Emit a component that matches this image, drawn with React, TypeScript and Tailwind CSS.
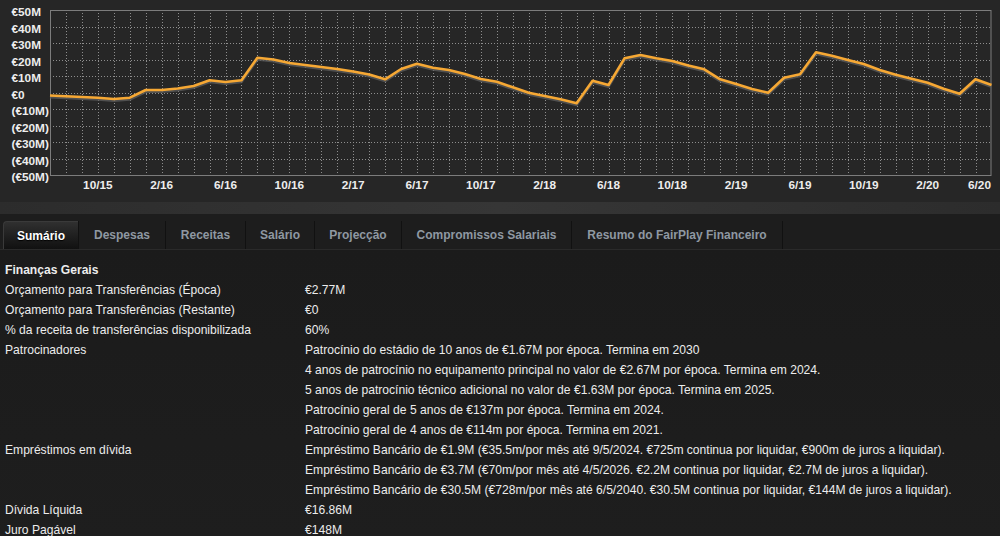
import React from "react";

const ys = [95.5, 96.3, 97, 97.8, 99, 97.7, 90, 90, 88.5, 86, 80.3, 82, 80.3, 57.7, 59.5, 63, 65, 67, 69, 71.5, 74.5, 79.3, 69, 63.7, 67.7, 70, 74, 79, 81.7, 87.3, 92.7, 96, 99.3, 103.3, 80.7, 85, 58.3, 55, 58.3, 61, 65.5, 69.3, 79.3, 84, 89, 92.7, 77.7, 74.3, 52.3, 55.7, 60, 64, 70, 74.7, 78.7, 82.7, 88.7, 93.7, 79.3, 85];

const L = 50;
const R = 991.5;
const T = 10;
const B = 175;
const dx = (R - L) / 59;
const dy = (B - T) / 10;

const yLabels = ["€50M", "€40M", "€30M", "€20M", "€10M", "€0", "(€10M)", "(€20M)", "(€30M)", "(€40M)", "(€50M)"];
const xLabels: [number, string][] = [
  [3, "10/15"], [7, "2/16"], [11, "6/16"], [15, "10/16"], [19, "2/17"], [23, "6/17"], [27, "10/17"], [31, "2/18"], [35, "6/18"], [39, "10/18"], [43, "2/19"], [47, "6/19"], [51, "10/19"], [55, "2/20"],
];

function Chart() {
  const pts = ys.map((y, i) => `${(L + i * dx).toFixed(1)},${y}`).join(" ");
  const shadow = ys.map((y, i) => `${(L + i * dx).toFixed(1)},${y + 1.8}`).join(" ");
  return (
    <svg width={1000} height={202} className="block">
      <rect x={0} y={0} width={1000} height={202} fill="#262626" />
      {Array.from({ length: 58 }, (_, i) => {
        const x = Math.round(L + (i + 1) * dx) + 0.5;
        return <line key={"v" + i} x1={x} x2={x} y1={T} y2={B} stroke="#8e8e8e" strokeWidth={1} strokeDasharray="1 2" />;
      })}
      {Array.from({ length: 9 }, (_, i) => {
        const y = Math.round(T + (i + 1) * dy) + 0.5;
        return <line key={"h" + i} x1={L} x2={R} y1={y} y2={y} stroke="#8e8e8e" strokeWidth={1} strokeDasharray="1 2" />;
      })}
      <rect x={L + 0.5} y={T + 0.5} width={R - L - 1} height={B - T} fill="none" stroke="#7c7c7c" strokeWidth={1} />
      <polyline points={shadow} fill="none" stroke="#5a5a5a" strokeOpacity={0.8} strokeWidth={2.5} strokeLinejoin="round" />
      <polyline points={pts} fill="none" stroke="#f6a834" strokeWidth={2.6} strokeLinejoin="round" />
      {yLabels.map((t, i) => (
        <text key={t} x={11.5} y={T + i * dy + 6} fontFamily="'Liberation Sans', Arial, sans-serif" fontSize={11.8} fontWeight={700} fill="#ededed">
          {t}
        </text>
      ))}
      {xLabels.map(([k, t]) => (
        <text key={t} x={L + k * dx} y={189} textAnchor="middle" fontFamily="'Liberation Sans', Arial, sans-serif" fontSize={11.8} fontWeight={700} fill="#ededed">
          {t}
        </text>
      ))}
      <text x={991} y={189} textAnchor="end" fontFamily="'Liberation Sans', Arial, sans-serif" fontSize={11.8} fontWeight={700} fill="#ededed">
        6/20
      </text>
    </svg>
  );
}

const tabs: [string, string][] = [
  ["Sumário", "w-[75px]"],
  ["Despesas", "w-[87px]"],
  ["Receitas", "w-[80px]"],
  ["Salário", "w-[69px]"],
  ["Projecção", "w-[87px]"],
  ["Compromissos Salariais", "w-[170px]"],
  ["Resumo do FairPlay Financeiro", "w-[211px]"],
];

const rows: [string, string, boolean?][] = [
  ["Finanças Gerais", "", true],
  ["Orçamento para Transferências (Época)", "€2.77M"],
  ["Orçamento para Transferências (Restante)", "€0"],
  ["% da receita de transferências disponibilizada", "60%"],
  ["Patrocinadores", "Patrocínio do estádio de 10 anos de €1.67M por época. Termina em 2030"],
  ["", "4 anos de patrocínio no equipamento principal no valor de €2.67M por época. Termina em 2024."],
  ["", "5 anos de patrocínio técnico adicional no valor de €1.63M por época. Termina em 2025."],
  ["", "Patrocínio geral de 5 anos de €137m por época. Termina em 2024."],
  ["", "Patrocínio geral de 4 anos de €114m por época. Termina em 2021."],
  ["Empréstimos em dívida", "Empréstimo Bancário de €1.9M (€35.5m/por mês até 9/5/2024. €725m continua por liquidar, €900m de juros a liquidar)."],
  ["", "Empréstimo Bancário de €3.7M (€70m/por mês até 4/5/2026. €2.2M continua por liquidar, €2.7M de juros a liquidar)."],
  ["", "Empréstimo Bancário de €30.5M (€728m/por mês até 6/5/2040. €30.5M continua por liquidar, €144M de juros a liquidar)."],
  ["Dívida Líquida", "€16.86M"],
  ["Juro Pagável", "€148M"],
];

export default function App() {
  return (
    <div className="w-[1000px] h-[536px] overflow-hidden bg-[#1c1c1c] font-['Liberation_Sans',Arial,sans-serif]">
      <Chart />
      <div className="h-[12px] bg-gradient-to-r from-[#2c2c2c] via-[#363636] to-[#2c2c2c]" />
      <div className="h-[36px] bg-[#1d1d1d] flex items-end pl-[3px] border-b border-[#2a2a2a]">
        {tabs.map(([t, w], i) => (
          <div
            key={t}
            className={
              i === 0
                ? `${w} h-[28px] flex items-center justify-center rounded-tl-[4px] bg-gradient-to-b from-[#303030] to-[#111111] border-t border-l border-[#3a3a3a] text-white text-[12px] font-bold [text-shadow:0_1px_1px_#000]`
                : `${w} h-[28px] flex items-center justify-center border-l border-[#111111] text-[#8f98a2] text-[12px] font-bold`
            }
          >
            {t}
          </div>
        ))}
        <div className="h-[28px] border-l border-[#111111]" />
      </div>
      <div className="pt-[10px] bg-gradient-to-b from-[#1b1b1b] to-[#1e1e1e]">
        {rows.map(([a, b, bold], i) => (
          <div key={i} className="h-[20px] flex items-center text-[12.1px] text-[#ececec]">
            <div className={`w-[305px] pl-[5px] shrink-0 ${bold ? "font-bold" : ""}`}>{a}</div>
            <div className="whitespace-nowrap">{b}</div>
          </div>
        ))}
      </div>
    </div>
  );
}
